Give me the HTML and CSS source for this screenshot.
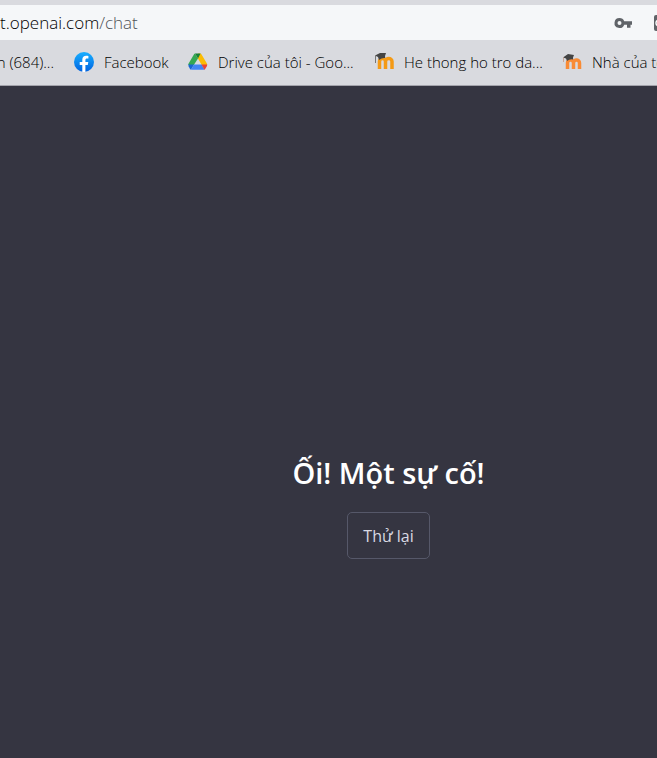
FILE: index.html
```html
<!DOCTYPE html>
<html lang="vi">
<head>
<meta charset="utf-8">
<meta name="viewport" content="width=device-width, initial-scale=1">
<title>ChatGPT</title>
<link rel="stylesheet" href="styles.css">
</head>
<body>
<header class="browser">
  <div class="address">
    <span class="url">t.openai.com<span class="path">/chat</span></span>
    <div class="actions">
      <button class="tool" type="button" aria-label="Mật khẩu">
        <svg width="18" height="12" viewBox="0 0 18 12"><path fill="#5f6368" fill-rule="evenodd" d="M5.500 1a5 5 0 1 0 4.700 6.700H13v3h3.500v-3H18V4.300h-7.800A5 5 0 0 0 5.500 1zm0 3a2 2 0 1 1 0 4 2 2 0 0 1 0-4z"/></svg>
      </button>
      <button class="tool" type="button" aria-label="Dịch">
        <svg width="18" height="16" viewBox="0 0 18 16"><rect width="18" height="16" rx="2" fill="#5f6368"/><path d="M9 5H5a3 3 0 0 0 0 6h3V8H6" fill="none" stroke="#fff" stroke-width="1.500"/></svg>
      </button>
    </div>
  </div>
  <nav class="bookmarks">
    <a class="bookmark clipped" href="#"><span>n (684)...</span></a>
    <a class="bookmark" href="#">
      <svg width="20" height="20" viewBox="0 0 20 20"><defs><linearGradient id="fb" x1="0" y1="0" x2="0" y2="1"><stop offset="0" stop-color="#19afff"/><stop offset="1" stop-color="#0062e0"/></linearGradient></defs><circle cx="10" cy="10" r="10" fill="url(#fb)"/><path fill="#fff" d="M8.300 19.900v-7H5.700V10h2.600V7.800c0-2.700 1.500-4.100 3.900-4.100.8 0 1.500.1 2.200.2v2.500h-1.300c-1.300 0-1.700.7-1.700 1.600v2h2.900l-.5 2.900h-2.400v7a10 10 0 0 1-3.100 0z"/></svg>
      <span>Facebook</span>
    </a>
    <a class="bookmark" href="#">
      <svg width="20" height="20" viewBox="0 0 20 20"><path fill="#34a853" d="M7 1.500Q6.500 1.600 6.200 2L.6 11.600Q.2 12.300.3 13h5.500l4.200-6.500z"/><path fill="#fbbc04" d="M10 1.500h2.300q.7 0 1.100.7l5.500 9.400q.3.700.3 1.400h-5.500L8.600 4z"/><path fill="#188038" d="M7 1.500h5.500L10 6.600z"/><path fill="#1967d2" d="M.3 12.500h5.800L3 17.800Q2.500 17.600 2 17L.6 14.300z"/><path fill="#4285f4" d="M6 12.500h7.700l2.900 5.300H3z"/><path fill="#ea4335" d="M13.500 12.500h5.700q0 1-.4 1.700L17.200 17q-.3.500-.8.800z"/></svg>
      <span>Drive của tôi - Goo...</span>
    </a>
    <a class="bookmark" href="#">
      <svg width="20" height="20" viewBox="0 0 20 20"><path fill="none" stroke="#f49a16" stroke-width="3.500" d="M5.500 17V9.500c0-4 6-4 6 0V17M11.500 9.500c0-4 6.500-4 6.500 0V17"/><path fill="#444" d="M1 3.500 6 1h6l-1 3 .2 2Q8 5.500 5 8L4 5z"/><path d="M1.500 3.500V11" stroke="#777"/></svg>
      <span>He thong ho tro da...</span>
    </a>
    <a class="bookmark" href="#">
      <svg width="20" height="20" viewBox="0 0 20 20"><path fill="none" stroke="#f98b35" stroke-width="3.500" d="M5.500 17v-6c0-4 6-4 6 0v6M11.500 11c0-4 6-4 6 0v6"/><path fill="#444" d="M1 5.500 6 2l6 1-1 2.500.2 2Q8 6.500 5 9L4 6.500z"/><path d="M1.500 5.500V10" stroke="#c9a797"/></svg>
      <span>Nhà của tôi</span>
    </a>
  </nav>
</header>
<main class="page">
  <h1 class="title">Ối! Một sự cố!</h1>
  <button class="retry" type="button">Thử lại</button>
</main>
</body>
</html>
```

FILE: styles.css
```css
* {
  box-sizing: border-box;
}

body {
  margin: 0;
  min-height: 100vh;
  display: flex;
  flex-direction: column;
  overflow: hidden;
  background: #353541;
  font-family: "Segoe UI", "Open Sans", "Noto Sans", sans-serif;
}

svg {
  display: block;
  flex: none;
}

.browser {
  padding-top: 5px;
  background: #d9dadf;
  border-bottom: 1px solid #a3a3ab;
}

.address {
  height: 35px;
  display: flex;
  align-items: center;
  justify-content: space-between;
  background: #f5f7f9;
  overflow: hidden;
}

.url {
  color: #000;
  font-size: 17px;
  font-weight: 350;
  line-height: 24px;
}

.path {
  color: #505358;
}

.actions {
  display: flex;
  align-items: center;
  gap: 22px;
  margin-right: -15px;
}

.tool {
  padding: 0;
  border: 0;
  background: none;
}

.bookmarks {
  height: 45px;
  padding-bottom: 1px;
  display: grid;
  grid-template-columns: 74px 114px 186px 188px 1fr;
  align-items: center;
}

.bookmark {
  display: flex;
  align-items: center;
  gap: 10px;
  min-width: 0;
  color: #000;
  font-size: 15px;
  font-weight: 350;
  line-height: 20px;
  text-decoration: none;
  white-space: nowrap;
}

.clipped {
  justify-content: flex-end;
  padding-right: 20px;
}

.page {
  flex: 1;
  display: flex;
  flex-direction: column;
  align-items: center;
  padding: 367px 0 0 120px;
}

.title {
  margin: 0 0 19px;
  color: #fff;
  font-size: 29px;
  font-weight: 600;
  line-height: 40px;
}

.retry {
  padding: 11px 15px 9px;
  border: 1px solid #565869;
  border-radius: 5px;
  background: transparent;
  color: #d9d9e3;
  font-family: inherit;
  font-size: 16px;
  line-height: 25px;
}
```
